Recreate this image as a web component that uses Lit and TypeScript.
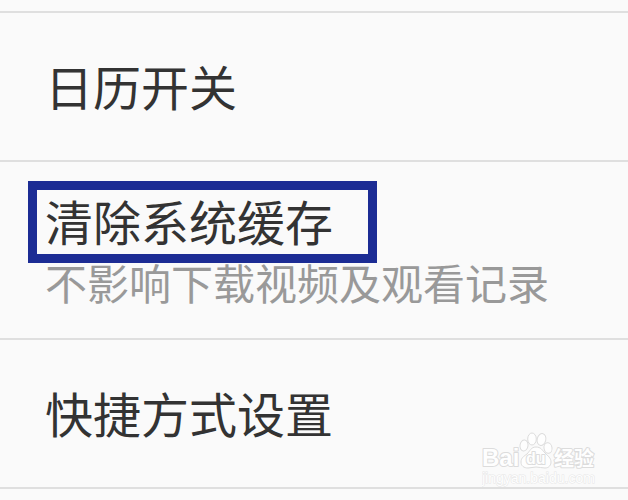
import { LitElement, html, css } from "lit";
import { customElement } from "lit/decorators.js";

interface Setting {
  title: string;
  note?: string;
  marked?: boolean;
}

const SETTINGS: Setting[] = [
  { title: "日历开关" },
  { title: "清除系统缓存", note: "不影响下载视频及观看记录", marked: true },
  { title: "快捷方式设置" },
];

@customElement("site-watermark")
class SiteWatermark extends LitElement {
  static styles = css`
    :host {
      display: block;
      font-family: "Liberation Sans", "Noto Sans CJK SC", sans-serif;
    }
    svg {
      display: block;
    }
    .shape,
    .word {
      fill: #fefefe;
      stroke: #dcdcdc;
      stroke-width: 1;
      stroke-linejoin: round;
    }
    .word {
      font-weight: 700;
      paint-order: stroke;
      stroke-width: 2;
    }
    .latin {
      font-size: 24px;
    }
    .du {
      font-size: 16px;
    }
    .han {
      font-size: 20px;
    }
    .site {
      font-size: 14px;
      fill: #fefefe;
      stroke: #e6e6e6;
      stroke-width: 1;
      paint-order: stroke;
    }
  `;

  render() {
    return html`
      <svg width="116" height="56" viewBox="0 0 116 56" role="img" aria-label="Baidu 经验">
        <text class="word latin" x="0" y="35">Bai</text>
        <g class="shape">
          <ellipse cx="42" cy="14.5" rx="4" ry="5.5" transform="rotate(8 42 14.5)" />
          <ellipse cx="50" cy="8" rx="4.3" ry="6" />
          <ellipse cx="59.5" cy="8.5" rx="4.3" ry="6" transform="rotate(14 59.5 8.5)" />
          <ellipse cx="66" cy="17" rx="4" ry="5.3" transform="rotate(-10 66 17)" />
          <path
            d="M54 16C49 16 48 20 45 23C42 25 39 27 39 31C39 35 42 37 46 37C49 37 51 36 54 36C57 36 60 37 63 37C67 37 69 34 69 31C69 27 66 25 63 22C60 19 59 16 54 16Z"
          />
        </g>
        <text class="word du" x="44" y="33">du</text>
        <text class="word han" x="72" y="35">经验</text>
        <text class="site" x="0" y="52">jingyan.baidu.com</text>
      </svg>
    `;
  }
}

@customElement("app-root")
class AppRoot extends LitElement {
  static styles = css`
    :host {
      display: block;
      position: relative;
      min-height: 100vh;
      box-sizing: border-box;
      padding-top: 11px;
      overflow: hidden;
      background: #fafafa;
      color: #333333;
      font-family: "Noto Sans CJK SC", sans-serif;
    }
    .list {
      list-style: none;
      margin: 0;
      padding: 0;
      border-top: 2px solid #dfdfdf;
    }
    .item {
      border-bottom: 2px solid #dfdfdf;
    }
    .row {
      display: flex;
      flex-direction: column;
      align-items: flex-start;
      width: 100%;
      margin: 0;
      padding: 40px 45px 43px;
      border: 0;
      background: none;
      color: inherit;
      font: inherit;
      text-align: left;
      cursor: pointer;
    }
    .row.detailed {
      padding: 26px 45px 26px;
    }
    .title {
      position: relative;
      font-size: 48px;
      line-height: 64px;
      white-space: nowrap;
    }
    .marker {
      position: absolute;
      inset: -7px -44px -11px -17px;
      border: 9px solid #1c2c94;
    }
    .note {
      font-size: 42px;
      line-height: 60px;
      color: #999999;
    }
    .watermark {
      position: absolute;
      right: 30px;
      bottom: 13px;
      pointer-events: none;
    }
  `;

  render() {
    return html`
      <ul class="list">
        ${SETTINGS.map(
          (s) => html`
            <li class="item">
              <button type="button" class="row ${s.note ? "detailed" : ""}">
                <span class="title">${s.title}${s.marked ? html`<span class="marker"></span>` : ""}</span>
                ${s.note ? html`<span class="note">${s.note}</span>` : ""}
              </button>
            </li>
          `
        )}
      </ul>
      <site-watermark class="watermark"></site-watermark>
    `;
  }
}
